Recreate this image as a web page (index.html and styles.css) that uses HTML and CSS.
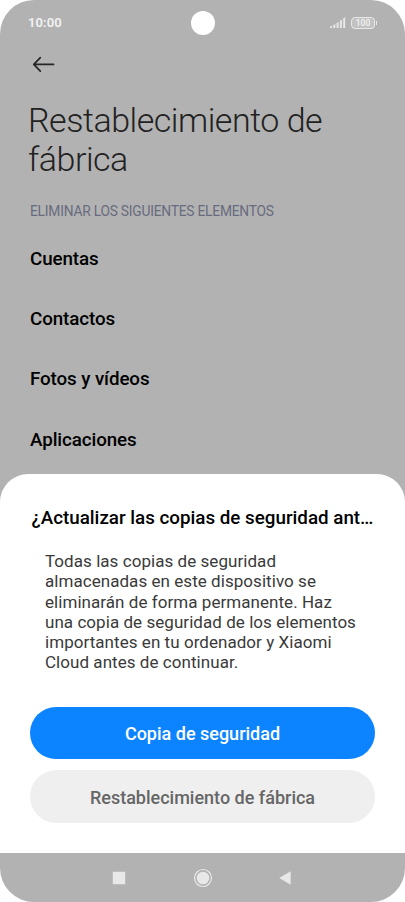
FILE: index.html
```html
<!DOCTYPE html>
<html lang="es">
<head>
<meta charset="utf-8">
<title>Restablecimiento de fábrica</title>
<link rel="stylesheet" href="styles.css">
</head>
<body>
<div class="phone">
  <header class="status">
    <span class="time">10:00</span>
    <span class="camera"></span>
    <span class="indicators">
      <svg width="16" height="11" viewBox="0 0 16 11" fill="#e8e8e8"><path d="M0 9.500L2 8.600V11H0zM3.300 8L5.300 7v4h-2zM6.600 6L8.600 5v6h-2zM9.900 3.700L11.900 2.700V11h-2zM13.200 1.500L15.200 0v11h-2z"/></svg>
      <span class="battery">100</span>
      <span class="nub"></span>
    </span>
  </header>
  <main class="page">
    <svg class="back" width="24" height="18" viewBox="0 0 24 18" fill="none" stroke="#252525" stroke-width="1.700" stroke-linecap="round" stroke-linejoin="round"><path d="M21.500 9.400H1.800M8.300 2.600L1.800 9.400L8.300 16.200"/></svg>
    <h1>Restablecimiento de<br>fábrica</h1>
    <h2>ELIMINAR LOS SIGUIENTES ELEMENTOS</h2>
    <ul class="items">
      <li>Cuentas</li><li>Contactos</li><li>Fotos y vídeos</li><li>Aplicaciones</li>
    </ul>
  </main>
  <section class="dialog">
    <h3>¿Actualizar las copias de seguridad ant…</h3>
    <p>Todas las copias de seguridad<br>almacenadas en este dispositivo se<br>eliminarán de forma permanente. Haz<br>una copia de seguridad de los elementos<br>importantes en tu ordenador y Xiaomi<br>Cloud antes de continuar.</p>
    <button class="primary">Copia de seguridad</button>
    <button class="secondary">Restablecimiento de fábrica</button>
  </section>
  <nav class="navbar">
    <svg width="20" height="20" viewBox="0 0 20 20"><path fill="#e8e8e8" d="M3.800 3.800h12.400v12.400H3.800z"/></svg>
    <svg width="20" height="20" viewBox="0 0 20 20"><circle cx="10" cy="10" r="8.500" fill="none" stroke="#e8e8e8" stroke-width="1.200"/><circle cx="10" cy="10" r="6.300" fill="#e8e8e8"/></svg>
    <svg width="20" height="20" viewBox="0 0 20 20"><path fill="#e8e8e8" d="M3.200 10l11.500-6.700v13.400z"/></svg>
  </nav>
</div>
</body>
</html>
```
FILE: styles.css
```css
* { box-sizing: border-box; margin: 0; padding: 0; }
body { background: #fff; font-family: Roboto, sans-serif; }
.phone { width: 405px; height: 902px; border-radius: 34px; background: #b2b2b2; overflow: hidden; display: flex; flex-direction: column; }
.status { height: 45px; flex: none; display: grid; grid-template-columns: 1fr 24px 1fr; align-items: center; padding: 0 28px; color: #f2f2f2; }
.time { font-size: 13px; font-weight: 600; letter-spacing: .1px; }
.camera { width: 24px; height: 24px; border-radius: 50%; background: #fff; }
.indicators { display: flex; justify-content: flex-end; align-items: center; }
.indicators svg { margin-right: 5px; }
.battery { width: 24px; height: 12px; border: 1.5px solid #e8e8e8; border-radius: 4px; background: #c2c2c2; color: #f2f2f2; font-size: 8.5px; line-height: 10px; font-weight: 500; text-align: center; }
.nub { width: 1px; height: 4px; margin-left: 1px; background: #e8e8e8; }
.page { height: 429px; padding: 10px 30px 0; flex: none; }
.back { display: block; margin-left: 2px; }
h1 { font-size: 34px; line-height: 39px; font-weight: 300; letter-spacing: -.48px; color: #222; margin: 28px 0 0 -2px; white-space: nowrap; }
h2 { font-size: 13.8px; line-height: 16px; font-weight: 400; letter-spacing: -.23px; color: #686b7e; margin-top: 24px; white-space: nowrap; }
.items { list-style: none; margin-top: 10px; }
.items li { height: 60.2px; line-height: 60.2px; font-size: 18.8px; font-weight: 500; letter-spacing: -.1px; color: #000; }
.dialog { height: 379px; flex: none; background: #fff; border-radius: 28px 28px 0 0; padding: 32px 30px 0; }
h3 { font-size: 18.8px; line-height: 24px; font-weight: 500; text-align: center; white-space: nowrap; }
.dialog p { font-size: 17px; line-height: 20.3px; letter-spacing: .05px; color: #3a3a3a; margin: 21px 0 0 15px; white-space: nowrap; }
button { display: block; width: 345px; height: 52.6px; padding-top: 1px; border: 0; border-radius: 27px; font: 500 18px Roboto, sans-serif; }
.primary { background: #0d84ff; color: #fff; margin-top: 34px; }
.secondary { background: #efefef; color: #666; margin-top: 11px; }
.navbar { flex: 1; display: flex; justify-content: center; align-items: center; gap: 63.7px; }
```
